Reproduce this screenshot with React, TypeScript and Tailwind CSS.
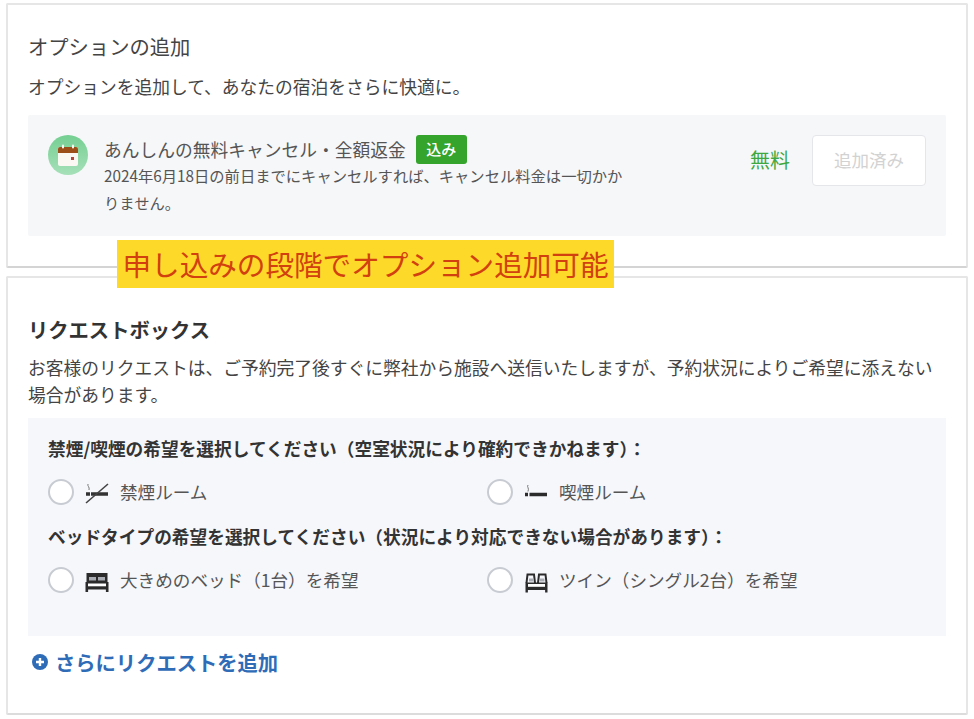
import React from 'react';

const font = 'font-["Noto_Sans_CJK_JP","Noto_Sans",sans-serif]';

const CalendarIcon = () => (
  <div className="flex h-[40px] w-[40px] shrink-0 items-center justify-center rounded-full bg-gradient-to-b from-[#74cf92] to-[#a6e0b9]">
    <svg width="22" height="24" viewBox="0 0 22 24">
      <rect x="1" y="4" width="20" height="19" rx="2" fill="#fbf8f3" />
      <path d="M1 6a2 2 0 0 1 2-2h16a2 2 0 0 1 2 2v4H1z" fill="#9c4f18" />
      <rect x="5" y="1.5" width="2" height="4" rx="1" fill="#fbf8f3" />
      <rect x="15" y="1.5" width="2" height="4" rx="1" fill="#fbf8f3" />
      <rect x="14" y="14" width="3" height="3" fill="#b5473a" />
    </svg>
  </div>
);

const NoSmokeIcon = () => (
  <svg className="overflow-visible" width="24" height="24" viewBox="0 0 24 24" fill="none">
    <path d="M1 14h4M6 14h17" stroke="#333" strokeWidth="3.4" />
    <path d="M1 23 23 4" stroke="#444" strokeWidth="1.6" />
    <path d="M3 4c-1 2 2 3 1 6" stroke="#777" strokeWidth="1" />
  </svg>
);

const SmokeIcon = () => (
  <svg className="overflow-visible" width="24" height="24" viewBox="0 0 24 24" fill="none">
    <path d="M1 14.5h3M5.5 14.5H23" stroke="#2b2b2b" strokeWidth="3.4" />
    <path d="M4 5c-1.5 2 1.5 3 0 6.5" stroke="#777" strokeWidth="1" />
  </svg>
);

const BigBedIcon = () => (
  <svg className="overflow-visible" width="24" height="24" viewBox="0 0 24 24">
    <path d="M1.5 5h21v10h-21z" fill="#2b2b2b" />
    <path d="M4 9h7v3.5H4zM13 9h7v3.5h-7z" fill="#a9adb3" />
    <path d="M0.5 14h23v10h-2.6v-2.5H3.1V24H0.5z" fill="#2b2b2b" />
    <path d="M3 15.5h18v2.8H3z" fill="#fff" />
  </svg>
);

const TwinBedIcon = () => (
  <svg className="overflow-visible" width="24" height="24" viewBox="0 0 24 24">
    <path d="M2.5 15 3.5 6.5H10l1 8.5M14 15l1-8.500h6.500l1 8.500" fill="none" stroke="#2b2b2b" strokeWidth="2" />
    <path d="M5 10.500h4.500v3H5zM16 10.500h4.500v3H16z" fill="#a9adb3" />
    <path d="M1.500 14.500h22V24.500h-2.400v-2.500H3.900v2.500H1.500z" fill="#2b2b2b" />
    <path d="M4 16h17v2.800H4z" fill="#fff" />
  </svg>
);

const Option = ({ icon, label }: { icon: React.ReactNode; label: string }) => (
  <label className="flex items-center">
    <span className="h-[26px] w-[26px] shrink-0 rounded-full border-2 border-[#c8ccd2] bg-white" />
    <span className="ml-[11px] flex w-[24px] shrink-0 justify-center">{icon}</span>
    <span className="ml-[11px] text-[17.6px] leading-[26px] text-[#555]">{label}</span>
  </label>
);

export default function App() {
  return (
    <div className={`${font} relative h-[719px] w-[974px] overflow-hidden bg-white pl-[6px] pr-[6px] pt-[3px]`}>
      <section className="h-[265px] rounded-[2px] border-2 border-[#e6e6e6] border-b-[#d4d4d4] bg-white px-[20px]">
        <h2 className="pt-[26px] text-[20.3px] font-normal leading-[30px] text-[#444]">オプションの追加</h2>
        <p className="mt-[11px] text-[17.75px] leading-[28px] text-[#444]">オプションを追加して、あなたの宿泊をさらに快適に。</p>
        <div className="mt-[15px] flex h-[121px] rounded-[2px] bg-[#f6f7f9] pl-[20px] pr-[20px] pt-[20px]">
          <div>
            <CalendarIcon />
          </div>
          <div className="ml-[16px] w-[524px]">
            <div className="flex items-center">
              <span className="text-[17.75px] leading-[29px] text-[#555]">あんしんの無料キャンセル・全額返金</span>
              <span className="ml-[10px] flex h-[29px] w-[51px] items-center justify-center rounded-[3px] bg-[#34a42c] text-[15px] font-medium text-white">込み</span>
            </div>
            <p className="mt-[-2px] text-[15.3px] leading-[27px] text-[#555]">2024年6月18日の前日までにキャンセルすれば、キャンセル料金は一切かかりません。</p>
          </div>
          <span className="ml-auto mt-[10px] text-[20px] leading-[30px] text-[#3fa83f]">無料</span>
          <button className="ml-[22px] h-[51px] w-[114px] rounded-[4px] border border-[#e5e6ea] bg-white text-[17.5px] text-[#d2d2d2]">追加済み</button>
        </div>
      </section>

      <section className="mt-[8px] h-[439px] rounded-[2px] border-2 border-[#e6e6e6] border-b-[#dcdcdc] bg-white px-[20px]">
        <h2 className="pt-[36px] text-[20.3px] font-bold leading-[30px] text-[#333]">リクエストボックス</h2>
        <p className="mt-[10px] text-[17.75px] leading-[27px] text-[#444]">お客様のリクエストは、ご予約完了後すぐに弊社から施設へ送信いたしますが、予約状況によりご希望に添えない場合があります。</p>
        <div className="mt-[10px] h-[218px] bg-[#f6f7fb] px-[20px] pt-[16px]">
          <p className="text-[17.7px] font-bold leading-[28px] text-[#333]">禁煙/喫煙の希望を選択してください（空室状況により確約できかねます）：</p>
          <div className="mt-[17px] grid grid-cols-[439px_1fr]">
            <Option icon={<NoSmokeIcon />} label="禁煙ルーム" />
            <Option icon={<SmokeIcon />} label="喫煙ルーム" />
          </div>
          <p className="mt-[17px] text-[17.7px] font-bold leading-[28px] text-[#333]">ベッドタイプの希望を選択してください（状況により対応できない場合があります）：</p>
          <div className="mt-[17px] grid grid-cols-[439px_1fr]">
            <Option icon={<BigBedIcon />} label="大きめのベッド（1台）を希望" />
            <Option icon={<TwinBedIcon />} label="ツイン（シングル2台）を希望" />
          </div>
        </div>
        <a className="mt-[11px] flex items-center pl-[4px] text-[20.3px] font-bold leading-[30px] text-[#2f6cb8]">
          <svg width="16" height="16" viewBox="0 0 16 16">
            <circle cx="8" cy="8" r="8" fill="#2f6cb8" />
            <path d="M8 4v8M4 8h8" stroke="#fff" strokeWidth="2.4" />
          </svg>
          <span className="ml-[7px]">さらにリクエストを追加</span>
        </a>
      </section>

      <div className="absolute left-[117px] top-[240px] flex h-[48px] w-[497px] items-center justify-center bg-[#fdd92a] text-[28.6px] leading-none text-[#d2400f]">
        申し込みの段階でオプション追加可能
      </div>
    </div>
  );
}
